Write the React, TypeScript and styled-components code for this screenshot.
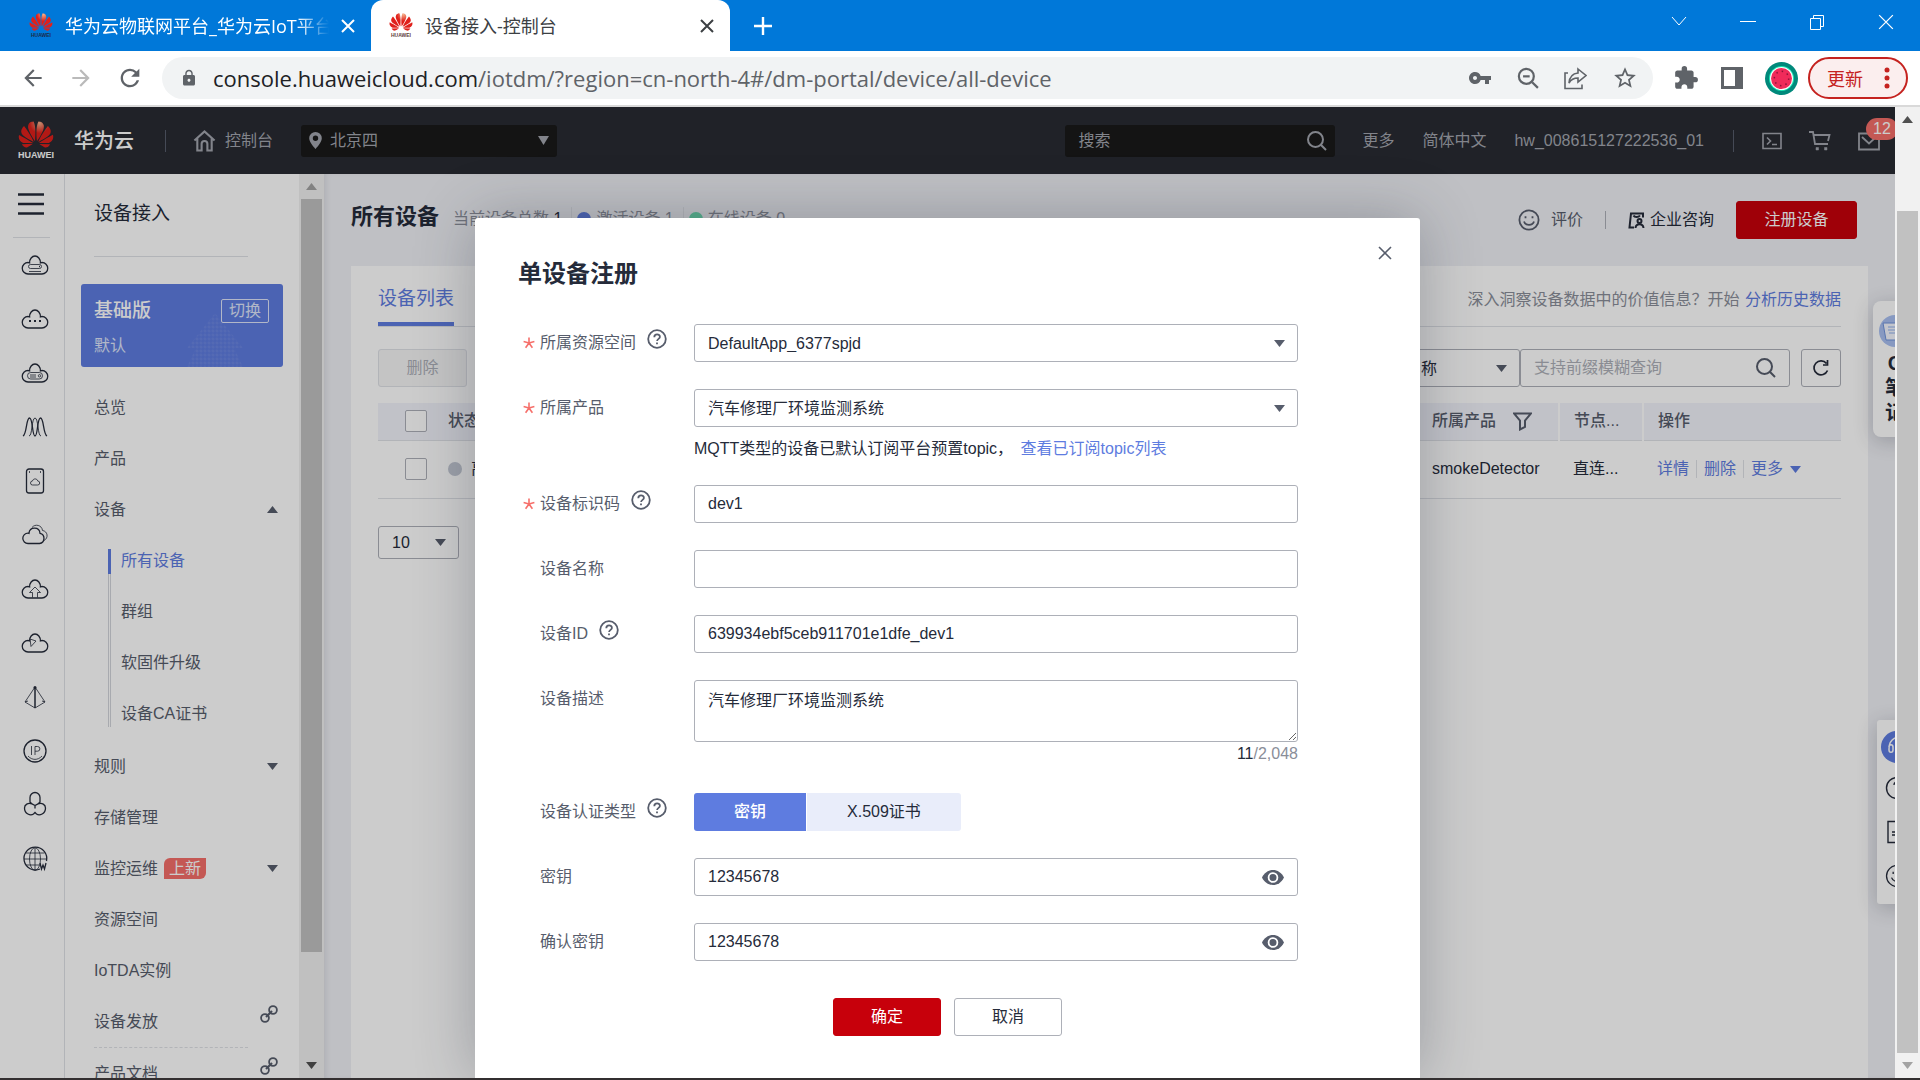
import React, { useState } from 'react';
import styled, { createGlobalStyle, css } from 'styled-components';
import {
  MdArrowBack,
  MdArrowForward,
  MdRefresh,
  MdLock,
  MdVpnKey,
  MdExtension,
  MdStarBorder,
} from 'react-icons/md';
import { SiHuawei } from 'react-icons/si';

const c = {
  brand: '#5e7ce0',
  red: '#c7000b',
  badge: '#f66f6a',
  ink: '#252b3a',
  text: '#575d6c',
  weak: '#8a8e99',
  border: '#adb0b8',
  line: '#dfe1e6',
  page: '#eff0f5',
};

const GlobalStyle = createGlobalStyle`
  *, *::before, *::after { box-sizing: border-box; }
  html, body { margin: 0; overflow: hidden; }
  body, button, input, select, textarea {
    font-family: "Liberation Sans", "Noto Sans CJK SC", sans-serif;
    font-size: 16px;
  }
  body { color: ${c.text}; line-height: 24px; }
  a { color: inherit; text-decoration: none; }
  button { padding: 0; border: 0; background: none; color: inherit; cursor: pointer; }
  ul { margin: 0; padding: 0; list-style: none; }
  h1, h2, p { margin: 0; }
  svg { display: block; flex: none; }
`;

const Window = styled.div`
  display: flex;
  flex-direction: column;
  height: 100vh;
  border-bottom: 2px solid #332f30;
  overflow: hidden;
`;

/* ---------- browser frame ---------- */

const TabStrip = styled.div`
  display: flex;
  flex: none;
  align-items: stretch;
  height: 51px;
  background: #0078d9;
  font-family: "Open Sans", "Noto Sans CJK SC", sans-serif;
`;

const Tab = styled.div<{ $active?: boolean }>`
  display: flex;
  align-items: center;
  gap: 12px;
  width: ${(p) => (p.$active ? 359 : 371)}px;
  padding: 0 16px 0 ${(p) => (p.$active ? 18 : 29)}px;
  border-radius: 12px 12px 0 0;
  background: ${(p) => (p.$active ? '#fff' : 'transparent')};
  color: ${(p) => (p.$active ? '#3c4043' : '#fff')};
`;

const TabTitle = styled.span<{ $fade?: boolean }>`
  flex: 1;
  overflow: hidden;
  white-space: nowrap;
  font-size: 18px;
  ${(p) =>
    p.$fade &&
    css`
      mask-image: linear-gradient(to right, #000 88%, transparent);
    `}
`;

const IconButton = styled.button`
  display: grid;
  place-items: center;
  flex: none;
`;

const NewTab = styled(IconButton)`
  width: 66px;
  color: #fff;
`;

const WindowButtons = styled.div`
  display: flex;
  align-items: flex-start;
  margin-left: auto;
  color: #fff;
  button {
    width: 69px;
    height: 44px;
  }
`;

const Toolbar = styled.div`
  display: flex;
  flex: none;
  align-items: center;
  height: 56px;
  padding: 0 12px 0 20px;
  border-bottom: 2px solid #d9d9d9;
  background: #fff;
  color: #5f6368;
`;

const NavButtons = styled.div`
  display: flex;
  gap: 22px;
  width: 142px;
`;

const AddressBar = styled.div`
  display: flex;
  flex: 1;
  align-items: center;
  height: 42px;
  padding: 0 15px 0 18px;
  border-radius: 21px;
  background: #f1f3f4;
`;

const Url = styled.span`
  flex: 1;
  margin-left: 15px;
  color: #5f6368;
  font-family: "Open Sans", "Noto Sans", sans-serif;
  font-size: 22px;
  b {
    color: #202124;
    font-weight: 400;
  }
`;

const IconRow = styled.div<{ $gap: number }>`
  display: flex;
  align-items: center;
  gap: ${(p) => p.$gap}px;
`;

const Extensions = styled(IconRow)`
  margin: 0 10px 0 20px;
`;

const UpdateButton = styled.button`
  display: flex;
  align-items: center;
  gap: 21px;
  height: 42px;
  padding: 0 16px 0 17px;
  border: 2px solid #c5221f;
  border-radius: 21px;
  background: #fbeeee;
  color: #c5221f;
  font-size: 18px;
`;

/* ---------- page viewport ---------- */

const Viewport = styled.div`
  display: flex;
  flex: 1;
  min-height: 0;
`;

const Page = styled.div`
  position: relative;
  display: flex;
  flex: 1;
  flex-direction: column;
  min-width: 0;
  overflow: hidden;
  background: ${c.page};
`;

const ScrollTrack = styled.div`
  display: flex;
  flex: none;
  flex-direction: column;
  align-items: center;
  width: 25px;
  background: #f1f1f1;
`;

const ScrollThumb = styled.div<{ $grow: number }>`
  flex: ${(p) => p.$grow};
  width: 21px;
  background: #c1c1c1;
`;

const ScrollSpace = styled.div<{ $grow: number }>`
  flex: ${(p) => p.$grow};
`;

const ScrollArrow = styled.div<{ $idle?: boolean }>`
  display: grid;
  place-items: center;
  height: 25px;
  color: ${(p) => (p.$idle ? '#a3a3a3' : '#505050')};
`;

/* ---------- console header ---------- */

const Header = styled.header`
  display: flex;
  flex: none;
  align-items: center;
  height: 67px;
  padding: 0 15px 0 18px;
  background: #282b33;
  color: #a3a6ae;
  white-space: nowrap;
`;

const LogoBox = styled.span<{ $size: number; $text: string }>`
  display: flex;
  flex: none;
  flex-direction: column;
  align-items: center;
  width: ${(p) => p.$size}px;
  color: ${(p) => p.$text};
  font: 700 ${(p) => (p.$size > 30 ? 9 : 5)}px "Liberation Sans", sans-serif;
  gap: ${(p) => (p.$size > 30 ? 2 : 1)}px;
`;

const Flower = styled(SiHuawei)<{ $size: number }>`
  width: ${(p) => p.$size}px;
  height: ${(p) => (p.$size > 30 ? 27 : 18)}px;
`;

const Brand = styled.a`
  display: flex;
  align-items: center;
  gap: 20px;
  color: #fff;
  font-size: 20px;
  font-weight: 500;
`;

const HeaderRule = styled.span<{ $left: number; $right: number }>`
  width: 1px;
  height: 22px;
  margin: 0 ${(p) => p.$right}px 0 ${(p) => p.$left}px;
  background: #575d6c;
`;

const HeaderLink = styled.a`
  display: flex;
  align-items: center;
  gap: 9px;
`;

const Region = styled.label`
  display: grid;
  align-items: center;
  width: 256px;
  height: 32px;
  margin: 0 auto 0 28px;
  border-radius: 3px;
  background: #191919;
  > * {
    grid-area: 1 / 1;
  }
  > svg:first-child {
    margin-left: 8px;
  }
  > svg:last-child {
    justify-self: end;
    margin-right: 8px;
  }
  select {
    height: 32px;
    padding: 0 29px;
    border: 0;
    background: transparent;
    color: inherit;
    appearance: none;
  }
`;

const HeaderSearch = styled.form`
  display: flex;
  align-items: center;
  width: 270px;
  height: 32px;
  margin-right: 27px;
  padding: 0 8px 0 13px;
  border-radius: 3px;
  background: #191919;
  input {
    flex: 1;
    min-width: 0;
    padding: 0;
    border: 0;
    background: none;
    color: inherit;
  }
  input::placeholder {
    color: #a3a6ae;
  }
`;

const HeaderLinks = styled.nav`
  display: flex;
  gap: 28px;
`;

const MailButton = styled(IconButton)`
  position: relative;
`;

const MailCount = styled.span`
  position: absolute;
  left: 8px;
  bottom: 12px;
  padding: 0 7px;
  border-radius: 11px;
  background: ${c.badge};
  color: #fff;
  line-height: 22px;
`;

/* ---------- left side ---------- */

const Body = styled.div`
  display: flex;
  flex: 1;
  min-height: 0;
`;

const Rail = styled.nav`
  display: flex;
  flex: none;
  flex-direction: column;
  width: 65px;
  padding: 0 14px 0 13px;
  border-right: 1px solid ${c.line};
  background: #fff;
  color: ${c.ink};
`;

const RailToggle = styled(IconButton)`
  height: 63px;
  padding: 0 1px 4px 0;
`;

const RailList = styled.ul`
  border-top: 1px solid ${c.line};
  a {
    display: grid;
    place-items: center;
    height: 54px;
    padding-left: 7px;
  }
`;

const Side = styled.aside`
  flex: none;
  width: 234px;
  overflow: hidden;
  padding: 0 16px;
  background: #fff;
`;

const SideTitle = styled.h2`
  margin: 0 35px 27px 13px;
  padding: 28px 0 30px;
  border-bottom: 1px solid ${c.line};
  color: ${c.ink};
  font-size: 19px;
  font-weight: 400;
`;

const Plan = styled.section`
  position: relative;
  display: grid;
  grid-template-columns: 1fr auto;
  gap: 11px 0;
  padding: 15px 14px 9px 13px;
  border-radius: 3px;
  background: ${c.brand};
  color: #dfe5fa;
  &::after {
    content: '';
    position: absolute;
    right: 40px;
    bottom: 0;
    width: 56px;
    height: 54px;
    background: radial-gradient(circle, rgba(255, 255, 255, 0.07) 1px, transparent 2px) 0 0 / 4px 4px;
    clip-path: polygon(50% 0, 100% 65%, 84% 65%, 100% 100%, 0 100%, 16% 65%, 0 65%);
  }
  strong {
    color: #fff;
    font-size: 19px;
    font-weight: 500;
  }
  button {
    width: 48px;
    height: 24px;
    border: 1px solid #dfe5fa;
    border-radius: 2px;
    line-height: 16px;
  }
`;

const Menu = styled.ul`
  padding: 15px 0 0 13px;
`;

const MenuLink = styled.a`
  display: flex;
  align-items: center;
  height: 51px;
  padding-right: 5px;
  > svg:last-child {
    margin-left: auto;
  }
`;

const MenuRule = styled.li`
  height: 0;
  margin-right: 35px;
  border-top: 1px dashed ${c.line};
`;

const SubMenu = styled.ul`
  display: grid;
  gap: 26px;
  margin: 14px 0 14px 14px;
  background: linear-gradient(to right, #d3d5db 1px, transparent 1px 2px, #d3d5db 2px 3px, transparent 3px);
`;

const SubLink = styled.a<{ $active?: boolean }>`
  display: block;
  height: 25px;
  padding-left: 10px;
  border-left: 3px solid ${(p) => (p.$active ? c.brand : 'transparent')};
  color: ${(p) => (p.$active ? c.brand : c.text)};
`;

const NewTag = styled.span`
  height: 21px;
  margin-left: 6px;
  padding: 0 5px;
  border-radius: 6px 0 6px 0;
  background: ${c.badge};
  color: #fff;
  line-height: 21px;
`;

const LinkMark = styled.span`
  margin: 0 0 16px auto;
`;

/* ---------- main column ---------- */

const Main = styled.main`
  display: flex;
  flex: 1;
  flex-direction: column;
  min-width: 0;
  padding: 0 27px;
  box-shadow: inset 4px 0 6px -3px rgba(37, 43, 58, 0.12);
`;

const TitleBar = styled.div`
  display: flex;
  flex: none;
  align-items: center;
  height: 92px;
  padding-right: 11px;
  color: ${c.text};
`;

const Summary = styled.div`
  display: flex;
  align-items: baseline;
  margin-right: auto;
  padding-bottom: 4px;
  color: ${c.weak};
  h1 {
    margin-right: 14px;
    color: ${c.ink};
    font-size: 22px;
    font-weight: 700;
  }
`;

const Stat = styled.span<{ $dot?: string }>`
  ${(p) =>
    p.$dot &&
    css`
      margin-left: 9px;
      padding-left: 5px;
      border-left: 1px solid ${c.line};
      &::before {
        content: '';
        display: inline-block;
        width: 14px;
        height: 14px;
        margin-right: 5px;
        border-radius: 50%;
        background: ${p.$dot};
        vertical-align: -2px;
      }
    `}
  b {
    color: ${(p) => (p.$dot ? 'inherit' : c.ink)};
    font-weight: 400;
  }
`;

const ActionLink = styled.a<{ $dark?: boolean }>`
  display: flex;
  align-items: center;
  gap: ${(p) => (p.$dark ? 5 : 11)}px;
  margin-right: ${(p) => (p.$dark ? 22 : 0)}px;
  color: ${(p) => (p.$dark ? c.ink : c.text)};
`;

const ActionRule = styled.span`
  width: 1px;
  height: 18px;
  margin: 0 22px;
  background: ${c.border};
`;

const Button = styled.button<{ $kind?: 'primary' | 'disabled'; $width: number }>`
  width: ${(p) => p.$width}px;
  height: 38px;
  padding-bottom: 1px;
  border: 1px solid ${c.border};
  border-radius: 3px;
  background: #fff;
  color: ${c.ink};
  line-height: 24px;
  ${(p) =>
    p.$kind === 'primary' &&
    css`
      border-color: ${c.red};
      background: ${c.red};
      color: #fff;
    `}
  ${(p) =>
    p.$kind === 'disabled' &&
    css`
      border-color: ${c.line};
      background: #f5f5f6;
      color: ${c.border};
    `}
`;

const Card = styled.section`
  flex: 1;
  padding: 0 27px;
  background: #fff;
`;

const CardTabs = styled.div`
  display: flex;
  align-items: flex-end;
  justify-content: space-between;
  height: 61px;
  border-bottom: 1px solid ${c.line};
  p {
    padding-bottom: 14px;
    color: ${c.weak};
  }
  p a {
    margin-left: 1px;
    color: ${c.brand};
  }
`;

const CardTab = styled.a`
  padding-bottom: 11px;
  border-bottom: 4px solid ${c.brand};
  color: ${c.brand};
  font-size: 19px;
`;

const Filters = styled.div`
  display: flex;
  align-items: center;
  padding: 22px 0 16px;
`;

const SelectBox = styled.span<{ $width?: string; $height?: number }>`
  display: grid;
  align-items: center;
  width: ${(p) => p.$width ?? '100%'};
  > * {
    grid-area: 1 / 1;
  }
  > svg {
    justify-self: end;
    margin-right: 13px;
    color: ${c.text};
    pointer-events: none;
  }
  select {
    width: 100%;
    height: ${(p) => p.$height ?? 38}px;
    padding: 0 13px;
    border: 1px solid ${c.border};
    border-radius: 3px;
    background: #fff;
    color: ${c.ink};
    appearance: none;
  }
`;

const FilterSearch = styled.label`
  display: flex;
  align-items: center;
  width: 270px;
  height: 38px;
  margin-right: 11px;
  padding: 0 13px;
  border: 1px solid ${c.border};
  border-radius: 3px;
  input {
    flex: 1;
    min-width: 0;
    padding: 0;
    border: 0;
    background: none;
  }
  input::placeholder {
    color: ${c.border};
  }
`;

const Spacer = styled.span`
  flex: 1;
`;

const RefreshButton = styled(IconButton)`
  width: 40px;
  height: 38px;
  border: 1px solid ${c.border};
  border-radius: 3px;
  color: ${c.ink};
`;

const Table = styled.table`
  width: 100%;
  border-collapse: collapse;
  table-layout: fixed;
  th,
  td {
    padding: 0 14px;
    border-bottom: 1px solid ${c.line};
    text-align: left;
    white-space: nowrap;
  }
  th {
    height: 37px;
    background: #f2f3fb;
    color: ${c.text};
    font-weight: 500;
  }
  th + th + th:not(:last-child) {
    border-right: 2px solid #fff;
  }
  td {
    height: 58px;
    color: ${c.ink};
  }
  th:first-child,
  td:first-child {
    padding: 0 0 0 27px;
  }
`;

const Check = styled.input`
  display: block;
  width: 22px;
  height: 22px;
  margin: 0;
  border: 1px solid ${c.border};
  border-radius: 2px;
  background: #fff;
  appearance: none;
`;

const Inline = styled.span<{ $gap: number }>`
  display: flex;
  align-items: center;
  gap: ${(p) => p.$gap}px;
`;

const Dot = styled.span`
  width: 14px;
  height: 14px;
  border-radius: 50%;
  background: #c3c8d4;
`;

const RowActions = styled.span`
  display: flex;
  align-items: center;
  color: ${c.brand};
  a + a {
    margin-left: 7px;
    padding-left: 7px;
    border-left: 1px solid ${c.line};
  }
  a {
    display: flex;
    align-items: center;
    gap: 7px;
    line-height: 18px;
  }
`;

const Pager = styled.div`
  padding-top: 27px;
`;

/* ---------- floating tools ---------- */

const Float = styled.div<{ $top: number; $width: number; $radius: number }>`
  position: absolute;
  top: ${(p) => p.$top}px;
  right: -22px;
  display: flex;
  flex-direction: column;
  align-items: center;
  width: ${(p) => p.$width}px;
  border-radius: ${(p) => p.$radius}px;
  background: #fff;
  box-shadow: 0 4px 20px rgba(37, 43, 58, 0.24);
  color: ${c.ink};
`;

const Notes = styled(Float)`
  padding: 14px 0 11px;
  font-size: 20px;
  font-weight: 700;
  line-height: 25px;
`;

const NotesText = styled.span`
  width: 20px;
  margin-top: 4px;
  text-align: center;
  word-break: break-all;
`;

const Tools = styled(Float)`
  gap: 20px;
  padding: 11px 0 16px;
`;

const ServiceBadge = styled.svg`
  margin-bottom: -7px;
`;

/* ---------- dialog ---------- */

const Mask = styled.div`
  position: absolute;
  inset: 0;
  display: flex;
  justify-content: center;
  align-items: stretch;
  padding-top: 111px;
  background: rgba(0, 0, 0, 0.2);
`;

const Dialog = styled.form`
  position: relative;
  width: 945px;
  padding: 38px 122px 0 43px;
  border-radius: 3px 3px 0 0;
  background: #fff;
  box-shadow: 0 0 60px rgba(37, 43, 58, 0.3);
`;

const DialogTitle = styled.h2`
  margin-bottom: 32px;
  color: ${c.ink};
  font-size: 24px;
  font-weight: 700;
  line-height: 36px;
`;

const CloseButton = styled(IconButton)`
  position: absolute;
  top: 23px;
  right: 23px;
  width: 24px;
  height: 24px;
  color: ${c.text};
`;

const Fields = styled.div`
  display: grid;
  gap: 27px;
  padding-left: 5px;
`;

const FieldRow = styled.div`
  display: grid;
  grid-template-columns: 171px 1fr;
  align-items: start;
`;

const FieldLabel = styled.div`
  display: grid;
  grid-template-columns: 17px auto 1fr;
  align-items: center;
  height: 38px;
`;

const LabelText = styled.label`
  grid-column: 2;
`;

const Help = styled.button`
  margin: 0 0 8px 11px;
  color: ${c.text};
`;

const inputLook = css`
  display: block;
  width: 100%;
  border: 1px solid ${c.border};
  border-radius: 3px;
  background: #fff;
  color: ${c.ink};
`;

const TextInput = styled.input`
  ${inputLook}
  height: 38px;
  padding: 0 13px;
`;

const TextArea = styled.textarea`
  ${inputLook}
  height: 62px;
  padding: 8px 13px;
  line-height: 24px;
  resize: vertical;
`;

const Counter = styled.p`
  color: ${c.weak};
  line-height: 24px;
  text-align: right;
  b {
    color: ${c.ink};
    font-weight: 400;
  }
`;

const Hint = styled.p`
  margin-top: 12px;
  color: ${c.ink};
  line-height: 19px;
  a {
    margin-left: 3px;
    color: ${c.brand};
  }
`;

const Segments = styled.div`
  display: flex;
  gap: 1px;
  border-radius: 3px;
`;

const Segment = styled.label<{ $on: boolean }>`
  position: relative;
  padding: 0 40px;
  border-radius: ${(p) => (p.$on ? '3px 0 0 3px' : '0 3px 3px 0')};
  background: ${(p) => (p.$on ? c.brand : '#e9edfa')};
  color: ${(p) => (p.$on ? '#fff' : c.ink)};
  font-weight: ${(p) => (p.$on ? 500 : 400)};
  line-height: 38px;
  input {
    position: absolute;
    inset: 0;
    margin: 0;
    opacity: 0;
  }
`;

const Secret = styled.div`
  ${inputLook}
  display: flex;
  align-items: center;
  height: 38px;
  padding: 0 13px;
  input {
    flex: 1;
    padding: 0;
    border: 0;
    color: inherit;
    outline: 0;
  }
  button {
    color: ${c.text};
  }
`;

const DialogButtons = styled.div`
  display: flex;
  justify-content: center;
  gap: 13px;
  margin-top: 37px;
  padding-left: 79px;
`;

/* ---------- drawings ---------- */

const Caret = ({ up, width = 11, height = 7 }: { up?: boolean; width?: number; height?: number }) => (
  <svg width={width} height={height} viewBox="0 0 10 6" preserveAspectRatio="none" fill="currentColor" aria-hidden>
    <path d={up ? 'M0 6 5 0l5 6z' : 'M0 0h10L5 6z'} />
  </svg>
);

type LineProps = { size?: number; w?: number; children: React.ReactNode; box?: number };
const Line = ({ size = 24, w = 2, box = 24, children }: LineProps) => (
  <svg
    width={size}
    height={size}
    viewBox={`0 0 ${box} ${box}`}
    fill="none"
    stroke="currentColor"
    strokeWidth={w}
    aria-hidden
  >
    {children}
  </svg>
);

const Cross = ({ size = 14, w = 2 }: { size?: number; w?: number }) => (
  <Line size={size} w={w} box={14}>
    <path d="M1 1l12 12M13 1 1 13" />
  </Line>
);

const Magnifier = ({ size = 20, minus }: { size?: number; minus?: boolean }) => (
  <Line size={size} box={20} w={2}>
    <circle cx="8.5" cy="8.5" r={minus ? 6.8 : 7.5} />
    <path d="m13.8 13.8 5.2 5.2" />
    {minus && <path d="M5.5 8.5h6" />}
  </Line>
);

const PetalShade = () => (
  <svg width="0" height="0" aria-hidden>
    <defs>
      <radialGradient id="petal" gradientUnits="userSpaceOnUse" cx="14.5" cy="4" r="7">
        <stop offset="0" stopColor="#f5b08a" />
        <stop offset="1" stopColor="#e0201b" />
      </radialGradient>
    </defs>
  </svg>
);

const Logo = ({ size, text }: { size: number; text: string }) => (
  <LogoBox $size={size} $text={text}>
    <Flower $size={size} viewBox="0 2.6 24 18.8" fill="url(#petal)" />
    HUAWEI
  </LogoBox>
);

const HelpIcon = () => (
  <Line size={20} box={20} w={1.8}>
    <circle cx="10" cy="10" r="8.8" />
    <path d="M7.3 8.2c0-3.7 5.6-3.6 5.6-.3 0 1.9-2.8 2.1-2.8 4.2M10 13.6v1.7" />
  </Line>
);

const Star = () => (
  <Line size={12} box={12} w={1.6}>
    <path d="M6 6V.4M6 6 .6 4.5M6 6l5.4-1.5M6 6l-3.4 4.8M6 6l3.4 4.8" stroke={c.badge} />
  </Line>
);

const EyeIcon = () => (
  <svg width="22" height="15" viewBox="0 0 22 15" aria-hidden>
    <path d="M0 7.5C4.8-2.5 17.2-2.5 22 7.5 17.2 17.5 4.8 17.5 0 7.5z" fill="currentColor" />
    <circle cx="11" cy="7.5" r="4.4" fill="none" stroke="#fff" strokeWidth="1.8" />
  </svg>
);

const ChainIcon = () => (
  <Line size={18} box={18} w={1.8}>
    <circle cx="5" cy="13" r="3.9" />
    <circle cx="13" cy="5" r="3.9" />
    <path d="M6 12l6-6" strokeWidth="2.2" />
  </Line>
);

const SmileIcon = ({ size = 22, w = 1.8 }: { size?: number; w?: number }) => (
  <Line size={size} box={22} w={w}>
    <circle cx="11" cy="11" r="9.6" />
    <path d="M6 12.5c1.5 4.5 8.5 4.5 10 0" />
    <path d="M7.5 7.2v2M14.5 7.2v2" />
  </Line>
);

const cloud =
  'M7 23a5.75 5.75 0 0 1 0-11.5q1 0 1.6.3C8.5 8 11 5 14 5s5.5 3 5.4 6.8q.6-.3 1.6-.3a5.75 5.75 0 0 1 0 11.5z';

const railIcons: React.ReactNode[] = [
  <>
    <path d={cloud} />
    <rect x="7.5" y="13.5" width="13" height="4" rx="2" strokeWidth=".8" />
    <path d="M8 20.5h12" strokeWidth=".8" />
    <path d="M18 15.5h1" />
  </>,
  <>
    <path d={cloud} />
    <path d="M8 16h2M13 16h2M18 16h2" strokeWidth="2" />
  </>,
  <>
    <path d={cloud} />
    <rect x="6.5" y="13.5" width="15" height="6.5" rx="3.2" strokeWidth=".8" />
    <path d="M9 16h6M9 18h6" strokeWidth=".8" />
    <circle cx="18.5" cy="16.8" r="1.2" strokeWidth=".8" />
  </>,
  <>
    <path d="M2 23C6 21 5 5 8.5 5s2.5 18 5.5 18S16 5 19.5 5 22 21 26 23" />
    <path d="M8 23c3.5 0 2.5-18 6-18s2.5 18 6 18" strokeWidth=".9" />
  </>,
  <>
    <rect x="5.5" y="2" width="17" height="24" rx="2.5" />
    <path d="M8 5h1M19 5h1" />
    <path d="M11.5 18a2 2 0 0 1 0-4c.5-2.8 4.8-2.8 5.2 0a2 2 0 0 1 0 4z" strokeWidth=".8" />
  </>,
  <>
    <path d="M7 22.5a5.2 5.2 0 0 1 0-10.4q.5 0 1 .2c.5-7 10.5-7 11 0a5.2 5.2 0 0 1-.5 10.2z" />
    <path d="M11 6.5c3-4 10-2.5 10.5 3 5 .5 6.5 7.5 1.500 10" strokeWidth=".8" />
  </>,
  <>
    <path d={cloud} />
    <path d="M11.5 22.5v-5h-3l5.5-5.5 5.5 5.5h-3v5" strokeWidth=".8" />
  </>,
  <>
    <path d={cloud} />
    <path d="m9 10 6 2-5 5.5z" strokeWidth=".8" />
  </>,
  <>
    <path d="M14 4v21" strokeWidth="1.5" />
    <path d="M14 4 4 19l10 6 10-6zM4 19l3-1M24 19l-3-1" strokeWidth=".8" />
    <circle cx="14" cy="4.5" r="1.5" fill="currentColor" stroke="none" />
  </>,
  <>
    <circle cx="14" cy="14" r="11" />
    <path d="M10.5 9v9M14 18V9.5h2.5a2.3 2.3 0 0 1 0 4.7H14M7 19c4 4.5 10 4.5 14 0" strokeWidth=".8" />
  </>,
  <>
    <path d="M11 12.9 9 11V6.500a5 5 0 0 1 10 0V11l-2 2M14 14.5v3M14 14.5l-3-1.6c-4-1.5-7.5.6-7.5 4.1 0 6 6 8 9 6l1.5-1.5 1.5 1.5c3 2 9 0 9-6 0-3.5-3.5-5.6-7.5-4.1z" />
  </>,
  <>
    <path d="M19 24A11.4 11.4 0 1 1 25.5 16" />
    <ellipse cx="14" cy="14" rx="5.5" ry="11.3" strokeWidth=".8" />
    <path d="M14 3v22M3 14h22.5M5 8h18.5M5 20h13" strokeWidth=".8" />
    <path d="m19 18 1.5 6 1.5-4 1.5 4 1.5-6" strokeWidth="1.3" />
  </>,
];

const SideMenu = () => (
  <Menu>
    <li><MenuLink href="#overview">总览</MenuLink></li>
    <li><MenuLink href="#product">产品</MenuLink></li>
    <li>
      <MenuLink href="#device">设备<Caret up /></MenuLink>
      <SubMenu>
        <li><SubLink href="#all" $active>所有设备</SubLink></li>
        <li><SubLink href="#group">群组</SubLink></li>
        <li><SubLink href="#ota">软固件升级</SubLink></li>
        <li><SubLink href="#ca">设备CA证书</SubLink></li>
      </SubMenu>
    </li>
    <li><MenuLink href="#rule">规则<Caret /></MenuLink></li>
    <li><MenuLink href="#storage">存储管理</MenuLink></li>
    <li><MenuLink href="#monitor">监控运维<NewTag>上新</NewTag><Caret /></MenuLink></li>
    <li><MenuLink href="#space">资源空间</MenuLink></li>
    <li><MenuLink href="#instance">IoTDA实例</MenuLink></li>
    <li><MenuLink href="#provision">设备发放<LinkMark><ChainIcon /></LinkMark></MenuLink></li>
    <MenuRule />
    <li><MenuLink href="#docs">产品文档<LinkMark><ChainIcon /></LinkMark></MenuLink></li>
  </Menu>
);

type FieldProps = {
  id: string;
  label: string;
  required?: boolean;
  help?: boolean;
  children: React.ReactNode;
};

const Field = ({ id, label, required, help, children }: FieldProps) => (
  <FieldRow>
    <FieldLabel>
      {required && <Star />}
      <LabelText htmlFor={id}>{label}</LabelText>
      {help && <Help type="button" aria-label="?"><HelpIcon /></Help>}
    </FieldLabel>
    <div>{children}</div>
  </FieldRow>
);

const RegisterDialog = () => {
  const [auth, setAuth] = useState('key');
  return (
    <Dialog onSubmit={(e) => e.preventDefault()}>
      <CloseButton type="button" aria-label="×"><Cross w={1.6} /></CloseButton>
      <DialogTitle>单设备注册</DialogTitle>
      <Fields>
        <Field id="space" label="所属资源空间" required help>
          <SelectBox>
            <select id="space"><option>DefaultApp_6377spjd</option></select>
            <Caret />
          </SelectBox>
        </Field>
        <Field id="product" label="所属产品" required>
          <SelectBox>
            <select id="product"><option>汽车修理厂环境监测系统</option></select>
            <Caret />
          </SelectBox>
          <Hint>
            MQTT类型的设备已默认订阅平台预置topic， <a href="#topics">查看已订阅topic列表</a>
          </Hint>
        </Field>
        <Field id="node" label="设备标识码" required help>
          <TextInput id="node" defaultValue="dev1" />
        </Field>
        <Field id="name" label="设备名称">
          <TextInput id="name" />
        </Field>
        <Field id="device-id" label="设备ID" help>
          <TextInput id="device-id" defaultValue="639934ebf5ceb911701e1dfe_dev1" />
        </Field>
        <Field id="description" label="设备描述">
          <TextArea id="description" defaultValue="汽车修理厂环境监测系统" />
          <Counter><b>11</b>/2,048</Counter>
        </Field>
        <Field id="auth-key" label="设备认证类型" help>
          <Segments>
            <Segment $on={auth === 'key'}>
              <input id="auth-key" type="radio" name="auth" checked={auth === 'key'} onChange={() => setAuth('key')} />
              密钥
            </Segment>
            <Segment $on={auth === 'x509'}>
              <input type="radio" name="auth" checked={auth === 'x509'} onChange={() => setAuth('x509')} />
              X.509证书
            </Segment>
          </Segments>
        </Field>
        <Field id="secret" label="密钥">
          <Secret>
            <input id="secret" defaultValue="12345678" />
            <button type="button" aria-label="密钥"><EyeIcon /></button>
          </Secret>
        </Field>
        <Field id="confirm" label="确认密钥">
          <Secret>
            <input id="confirm" defaultValue="12345678" />
            <button type="button" aria-label="确认密钥"><EyeIcon /></button>
          </Secret>
        </Field>
      </Fields>
      <DialogButtons>
        <Button type="submit" $kind="primary" $width={108}>确定</Button>
        <Button type="button" $width={108}>取消</Button>
      </DialogButtons>
    </Dialog>
  );
};

const BrowserFrame = () => (
  <>
    <TabStrip>
      <Tab>
        <Logo size={24} text="#1c2b4a" />
        <TabTitle $fade>华为云物联网平台_华为云IoT平台</TabTitle>
        <IconButton aria-label="×"><Cross /></IconButton>
      </Tab>
      <Tab $active>
        <Logo size={24} text="#5f4040" />
        <TabTitle>设备接入-控制台</TabTitle>
        <IconButton aria-label="×"><Cross /></IconButton>
      </Tab>
      <NewTab aria-label="+">
        <Line size={18} box={18} w={2.4}><path d="M9 0v18M0 9h18" /></Line>
      </NewTab>
      <WindowButtons>
        <IconButton aria-label="⌄"><Line size={16} box={16} w={1}><path d="m1 3 7 8 7-8" /></Line></IconButton>
        <IconButton aria-label="–"><Line size={16} box={16} w={1}><path d="M0 7.5h16" /></Line></IconButton>
        <IconButton aria-label="□"><Line size={16} box={16} w={1}><path d="M1.5 4.5h10v11h-10zM4.5 4.5v-3h10v11h-3" /></Line></IconButton>
        <IconButton aria-label="×"><Cross size={16} w={1.1} /></IconButton>
      </WindowButtons>
    </TabStrip>
    <Toolbar>
      <NavButtons>
        <IconButton aria-label="←"><MdArrowBack size={26} /></IconButton>
        <IconButton aria-label="→"><MdArrowForward size={26} color="#bababa" /></IconButton>
        <IconButton aria-label="↻"><MdRefresh size={28} /></IconButton>
      </NavButtons>
      <AddressBar>
        <MdLock size={18} />
        <Url><b>console.huaweicloud.com</b>/iotdm/?region=cn-north-4#/dm-portal/device/all-device</Url>
        <IconRow $gap={25}>
          <MdVpnKey size={24} />
          <Magnifier size={22} minus />
          <Line size={23} box={23} w={1.6}>
            <path d="M4 6H1v15.5h17v-4" />
            <path d="M14 2l8 6.5-8 6.5v-4c-4 0-7 1.5-9 5 .5-6 4-9.5 9-10z" />
          </Line>
          <MdStarBorder size={26} />
        </IconRow>
      </AddressBar>
      <Extensions $gap={22}>
        <MdExtension size={26} />
        <svg width="22" height="22" viewBox="0 0 22 22" fill="none" aria-hidden>
          <path d="M1.5 1.5h19v19h-19z" stroke="currentColor" strokeWidth="3" />
          <path d="M14 1h7v20h-7z" fill="currentColor" />
        </svg>
        <svg width="33" height="33" viewBox="0 0 33 33" aria-hidden>
          <circle cx="16.5" cy="16.5" r="16.5" fill="#00897b" />
          <circle cx="16.5" cy="16.5" r="12.5" fill="#1de9b6" />
          <circle cx="16.5" cy="16.5" r="11.5" fill="#fff" />
          <circle cx="16.5" cy="16.5" r="10.5" fill="#f02b5a" />
          <circle cx="16.5" cy="16.5" r="7.2" fill="none" stroke="#8b1538" strokeWidth="1.5" strokeDasharray="1.5 4.15" />
        </svg>
      </Extensions>
      <UpdateButton>
        更新
        <svg width="6" height="22" viewBox="0 0 6 22" fill="currentColor" aria-hidden>
          <circle cx="3" cy="3" r="2.5" />
          <circle cx="3" cy="11" r="2.5" />
          <circle cx="3" cy="19" r="2.5" />
        </svg>
      </UpdateButton>
    </Toolbar>
  </>
);

const ConsoleHeader = () => (
  <Header>
    <Brand href="#home"><Logo size={36} text="#fff" />华为云</Brand>
    <HeaderRule $left={31} $right={27} />
    <HeaderLink href="#console">
      <Line size={23} w={2.2}>
        <path d="M1.5 12 12 2.5 22.5 12M4.5 10v12.5h4.5v-7a3 3 0 0 1 6 0v7h4.5V10" />
      </Line>
      控制台
    </HeaderLink>
    <Region>
      <svg width="13" height="17" viewBox="0 0 13 17" fill="currentColor" aria-hidden>
        <path fillRule="evenodd" d="M6.5 0A6.3 6.3 0 0 0 .2 6.3C.2 10.500 6.500 17 6.500 17s6.300-6.500 6.300-10.700A6.300 6.300 0 0 0 6.500 0zm0 3.500a2.700 2.700 0 1 1 0 5.400 2.700 2.700 0 0 1 0-5.400z" />
      </svg>
      <select aria-label="region"><option>北京四</option></select>
      <Caret height={9} />
    </Region>
    <HeaderSearch onSubmit={(e) => e.preventDefault()}>
      <input aria-label="搜索" placeholder="搜索" />
      <IconButton aria-label="搜索"><Magnifier /></IconButton>
    </HeaderSearch>
    <HeaderLinks>
      <a href="#more">更多</a>
      <a href="#lang">简体中文</a>
      <a href="#user">hw_008615127222536_01</a>
    </HeaderLinks>
    <HeaderRule $left={29} $right={28} />
    <IconRow $gap={27}>
      <IconButton aria-label=">_">
        <Line size={20} box={20} w={1.6}><path d="M1 2.500h18v15H1zM5 6.500 8.500 10 5 13.500M10 13.500h5" /></Line>
      </IconButton>
      <IconButton aria-label="cart">
        <Line size={22} box={22} w={1.8}>
          <path d="M0 2h4l2 12h13M5 5h15.500L19 11" />
          <path d="M7 17.500h2.500v2.500H7zM15.500 17.500H18v2.500h-2.500z" fill="currentColor" strokeWidth=".5" />
        </Line>
      </IconButton>
      <MailButton aria-label="12">
        <Line size={22} box={22} w={1.8}><path d="M1 3.500h20v16H1zM4 7l7 6.500L18 7" /></Line>
        <MailCount>12</MailCount>
      </MailButton>
    </IconRow>
  </Header>
);

const DeviceTable = () => (
  <Table>
    <colgroup>
      <col width="56" />
      <col />
      <col width="141" />
      <col width="84" />
      <col width="198" />
    </colgroup>
    <thead>
      <tr>
        <th><Check type="checkbox" aria-label="所有设备" /></th>
        <th>状态</th>
        <th>
          <Inline $gap={17}>
            所属产品
            <Line size={19} box={19} w={2}><path d="M1 1.500h17l-6 7v6.500l-5 2.500v-9z" /></Line>
          </Inline>
        </th>
        <th>节点...</th>
        <th>操作</th>
      </tr>
    </thead>
    <tbody>
      <tr>
        <td><Check type="checkbox" aria-label="smokeDetector" /></td>
        <td><Inline $gap={9}><Dot />离线</Inline></td>
        <td>smokeDetector</td>
        <td>直连...</td>
        <td>
          <RowActions>
            <a href="#detail">详情</a>
            <a href="#delete">删除</a>
            <a href="#more">更多<Caret /></a>
          </RowActions>
        </td>
      </tr>
    </tbody>
  </Table>
);

export default function App() {
  return (
    <Window>
      <GlobalStyle />
      <PetalShade />
      <BrowserFrame />
      <Viewport>
        <Page>
          <ConsoleHeader />
          <Body>
            <Rail>
              <RailToggle aria-label="≡">
                <Line size={26} box={26} w={2.4}><path d="M0 3.5h26M0 13h26M0 22.5h26" /></Line>
              </RailToggle>
              <RailList>
                {railIcons.map((icon, i) => (
                  <li key={i}><a href={`#service-${i}`}><Line size={28} box={28} w={1.3}>{icon}</Line></a></li>
                ))}
              </RailList>
            </Rail>
            <Side>
              <SideTitle>设备接入</SideTitle>
              <Plan>
                <strong>基础版</strong>
                <button>切换</button>
                <span>默认</span>
              </Plan>
              <SideMenu />
            </Side>
            <ScrollTrack>
              <ScrollArrow $idle><Caret up /></ScrollArrow>
              <ScrollThumb $grow={753} />
              <ScrollSpace $grow={101} />
              <ScrollArrow><Caret /></ScrollArrow>
            </ScrollTrack>
            <Main>
              <TitleBar>
                <Summary>
                  <h1>所有设备</h1>
                  <Stat>当前设备总数 <b>1</b></Stat>
                  <Stat $dot={c.brand}>激活设备 <b>1</b></Stat>
                  <Stat $dot="#6cdbb0">在线设备 <b>0</b></Stat>
                </Summary>
                <ActionLink href="#rate"><SmileIcon />评价</ActionLink>
                <ActionRule />
                <ActionLink href="#consult" $dark>
                  <Line size={17} box={17} w={2}>
                    <path d="M6 15.500H1.500L3 1.500h12v4M5.500 3.500c1 2 5 2 6.500 0" />
                    <circle cx="11.500" cy="9" r="2" />
                    <path d="M7.500 16c.5-5 7.500-5 8 0" />
                  </Line>
                  企业咨询
                </ActionLink>
                <Button $kind="primary" $width={121}>注册设备</Button>
              </TitleBar>
              <Card>
                <CardTabs>
                  <CardTab href="#list">设备列表</CardTab>
                  <p>深入洞察设备数据中的价值信息？开始 <a href="#analyse">分析历史数据</a></p>
                </CardTabs>
                <Filters>
                  <Button $kind="disabled" $width={89} disabled>删除</Button>
                  <Spacer />
                  <SelectBox $width="161px">
                    <select aria-label="设备名称"><option>设备名称</option></select>
                    <Caret />
                  </SelectBox>
                  <FilterSearch>
                    <input aria-label="支持前缀模糊查询" placeholder="支持前缀模糊查询" />
                    <Magnifier />
                  </FilterSearch>
                  <RefreshButton aria-label="↻">
                    <Line size={18} box={18} w={1.7}><path d="M15.500 11.500A7 7 0 1 1 14.500 4.500M15.500 1v5H11" /></Line>
                  </RefreshButton>
                </Filters>
                <DeviceTable />
                <Pager>
                  <SelectBox $width="81px" $height={33}>
                    <select aria-label="10"><option>10</option></select>
                    <Caret />
                  </SelectBox>
                </Pager>
              </Card>
            </Main>
          </Body>
          <Notes $top={194} $width={44} $radius={8}>
            <svg width="32" height="32" viewBox="0 0 32 32" aria-hidden>
              <circle cx="16" cy="16" r="16" fill="#a9c0f2" />
              <path d="M4 8h24l2 17H7z" fill="#f4f7ff" stroke="#6f92dc" />
              <path d="M9 12h17M9 15h17M10 18h17" stroke="#8fb0ee" />
            </svg>
            <NotesText>C笔记</NotesText>
          </Notes>
          <Tools $top={613} $width={40} $radius={3}>
            <ServiceBadge width="32" height="32" viewBox="0 0 32 32" fill="none" stroke="#fff" strokeWidth="1.5" aria-hidden>
              <circle cx="16" cy="16" r="16" fill={c.brand} stroke="none" />
              <path d="M14 7c-4 2-6 6-6 11v1c0 3 4 3 4 0v-3c0-3-4-3-4 0M18 7c4 2 6 6 6 11v1c0 3-4 3-4 0v-3c0-3 4-3 4 0" />
            </ServiceBadge>
            <Line size={24} w={1.4}>
              <circle cx="12" cy="12" r="10.500" />
              <path d="M9 9c0-4 6-4 6 0 0 2-3 2-3 5" />
            </Line>
            <Line size={24} w={1.4}>
              <path d="M3 1.500h18v21H3zM7 12h8M7 15h8" />
            </Line>
            <SmileIcon size={24} w={1.2} />
          </Tools>
          <Mask><RegisterDialog /></Mask>
        </Page>
        <ScrollTrack>
          <ScrollArrow><Caret up /></ScrollArrow>
          <ScrollSpace $grow={79} />
          <ScrollThumb $grow={843} />
          <ScrollArrow $idle><Caret /></ScrollArrow>
        </ScrollTrack>
      </Viewport>
    </Window>
  );
}
